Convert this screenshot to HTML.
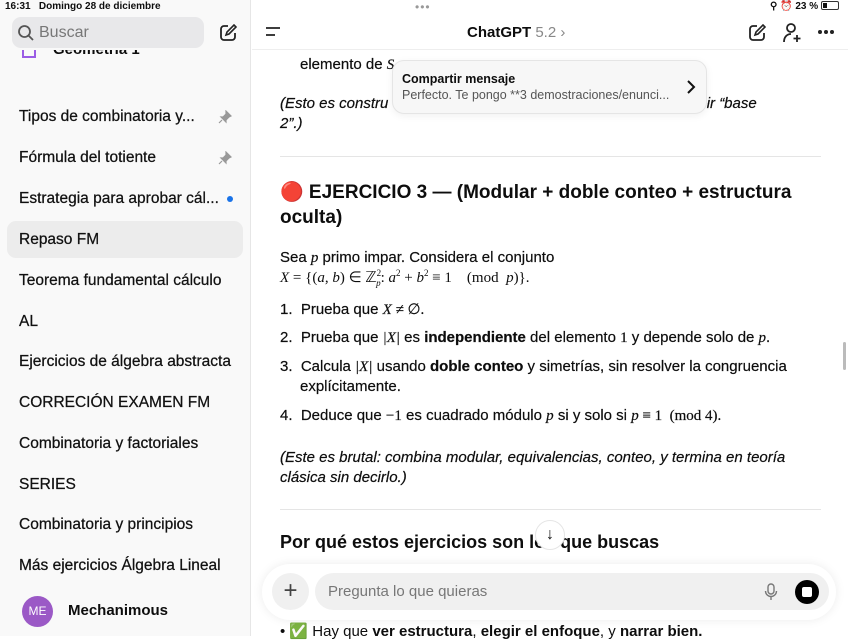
<!DOCTYPE html>
<html><head><meta charset="utf-8"><style>
*{margin:0;padding:0;box-sizing:border-box}
body{width:848px;height:636px;overflow:hidden;font-family:"Liberation Sans",sans-serif;color:#0d0d0d;background:#fff;position:relative}
.abs{position:absolute;white-space:nowrap}
#side{position:absolute;left:0;top:0;width:251px;height:636px;background:#f9f9f9;border-right:1px solid #e6e6e6}
.it{position:absolute;left:19px;font-size:15.5px;color:#111;-webkit-text-stroke:0.25px #111}
.m{font-family:"Liberation Serif",serif;font-style:italic}
.mr{font-family:"Liberation Serif",serif}
.t{font-size:15px;-webkit-text-stroke:0.2px #111}
</style></head><body>
<div id="side">
<div class="abs" style="left:0;top:50px;width:250px;height:16px;overflow:hidden">
<div class="abs" style="left:22px;top:-4px;width:14px;height:12px;border:2px solid #9b5de5;border-top:none"></div>
<div class="abs" style="left:53px;top:-9px;font-size:15px;font-weight:bold">Geometría 1</div></div>
<div class="abs" style="left:0;top:0;width:250px;height:50px;background:#f9f9f9"></div>
<div class="abs" style="left:5px;top:1px;font-size:10px;font-weight:bold">16:31&nbsp;&nbsp;&nbsp;Domingo 28 de diciembre</div>
<div class="abs" style="left:12px;top:17px;width:192px;height:31px;border-radius:9px;background:#e8e8ea"></div>
<svg class="abs" style="left:17px;top:24px" width="18" height="18" viewBox="0 0 18 18"><circle cx="7.5" cy="7.5" r="5.5" fill="none" stroke="#555" stroke-width="1.8"/><path d="M11.5 11.5L16 16" stroke="#555" stroke-width="1.8"/></svg>
<div class="abs" style="left:39px;top:24px;font-size:16px;color:#777">Buscar</div>
<svg class="abs" style="left:219px;top:24px" width="18" height="18" viewBox="0 0 18 18"><path d="M9 2H5a3 3 0 0 0-3 3v8a3 3 0 0 0 3 3h8a3 3 0 0 0 3-3V9" fill="none" stroke="#222" stroke-width="1.8"/><path d="M7 11l1-3 7-7 2 2-7 7z" fill="none" stroke="#222" stroke-width="1.6"/></svg>
<div class="abs" style="left:7px;top:221px;width:236px;height:37px;border-radius:9px;background:#ececec"></div>
<div class="it" style="top:108px">Tipos de combinatoria y...</div>
<div class="it" style="top:149px">Fórmula del totiente</div>
<div class="it" style="top:190px">Estrategia para aprobar cál...</div>
<div class="it" style="top:231px">Repaso FM</div>
<div class="it" style="top:272px">Teorema fundamental cálculo</div>
<div class="it" style="top:313px">AL</div>
<div class="it" style="top:353px">Ejercicios de álgebra abstracta</div>
<div class="it" style="top:394px">CORRECIÓN EXAMEN FM</div>
<div class="it" style="top:435px">Combinatoria y factoriales</div>
<div class="it" style="top:476px">SERIES</div>
<div class="it" style="top:516px">Combinatoria y principios</div>
<div class="it" style="top:557px">Más ejercicios Álgebra Lineal</div>
<svg class="abs" style="left:218px;top:110px" width="14" height="14" viewBox="0 0 14 14"><path d="M8 1l5 5-2 1-3 3 0 2-5-5 2 0 3-3z M4 10l-3 3" fill="#999" stroke="#999" stroke-width="1.2"/></svg>
<svg class="abs" style="left:218px;top:151px" width="14" height="14" viewBox="0 0 14 14"><path d="M8 1l5 5-2 1-3 3 0 2-5-5 2 0 3-3z M4 10l-3 3" fill="#999" stroke="#999" stroke-width="1.2"/></svg>
<div class="abs" style="left:227px;top:196px;width:6px;height:6px;border-radius:50%;background:#1a73e8"></div>
<div class="abs" style="left:22px;top:596px;width:31px;height:31px;border-radius:50%;background:#9b59c6;color:#fff;font-size:12px;text-align:center;line-height:31px">ME</div>
<div class="abs" style="left:68px;top:602px;font-size:15px;font-weight:bold">Mechanimous</div>
</div>

<div class="abs" style="left:415px;top:0;font-size:12px;color:#999;letter-spacing:1px">•••</div>
<div class="abs" style="left:770px;top:1px;font-size:10px;font-weight:bold">⚲ ⏰ 23 % <span style="display:inline-block;width:18px;height:9px;border:1px solid #333;border-radius:2px;vertical-align:-1px;position:relative"><span style="position:absolute;left:1px;top:1px;width:4px;height:5px;background:#111"></span></span></div>
<svg class="abs" style="left:265px;top:26px" width="16" height="12"><path d="M1 2h14M1 9h9" stroke="#222" stroke-width="1.8"/></svg>
<div class="abs" style="left:467px;top:24px;font-size:15px;font-weight:bold">ChatGPT <span style="font-weight:normal;color:#888">5.2 ›</span></div>
<svg class="abs" style="left:748px;top:24px" width="18" height="18" viewBox="0 0 18 18"><path d="M9 2H5a3 3 0 0 0-3 3v8a3 3 0 0 0 3 3h8a3 3 0 0 0 3-3V9" fill="none" stroke="#222" stroke-width="1.8"/><path d="M7 11l1-3 7-7 2 2-7 7z" fill="none" stroke="#222" stroke-width="1.6"/></svg>
<svg class="abs" style="left:782px;top:22px" width="20" height="22" viewBox="0 0 20 22"><circle cx="9" cy="6" r="4" fill="none" stroke="#222" stroke-width="1.8"/><path d="M2 20c0-5 3-8 7-8" fill="none" stroke="#222" stroke-width="1.8"/><path d="M15 13v7M11.5 16.5h7" stroke="#222" stroke-width="1.8"/></svg>
<div class="abs" style="left:818px;top:30px;width:4px;height:4px;border-radius:50%;background:#222;box-shadow:6px 0 #222,12px 0 #222"></div>
<div class="abs" style="left:252px;top:49px;width:596px;height:1px;background:#eee"></div>

<div class="abs t" style="left:300px;top:56px">elemento de <span class="m">S</span></div>
<div class="abs t" style="left:280px;top:95px;font-style:italic">(Esto es constru</div>
<div class="abs t" style="left:670px;top:95px;font-style:italic">n decir “base</div>
<div class="abs t" style="left:280px;top:115px;font-style:italic">2”.)</div>
<div class="abs" style="left:392px;top:60px;width:315px;height:54px;border-radius:12px;background:#f7f7f7;border:1px solid #e5e5e5;box-shadow:0 2px 8px rgba(0,0,0,.06)"></div>
<div class="abs" style="left:402px;top:72px;font-size:12.5px;font-weight:bold">Compartir mensaje</div>
<div class="abs" style="left:402px;top:88px;font-size:12.5px;color:#555">Perfecto. Te pongo **3 demostraciones/enunci...</div>
<svg class="abs" style="left:686px;top:80px" width="10" height="14"><path d="M2 1l6 6-6 6" fill="none" stroke="#111" stroke-width="2"/></svg>
<div class="abs" style="left:280px;top:156px;width:541px;height:1px;background:#e5e5e5"></div>
<div class="abs" style="left:280px;top:180px;font-size:19px;font-weight:bold;line-height:25px">🔴 EJERCICIO 3 — (Modular + doble conteo + estructura<br>oculta)</div>
<div class="abs t" style="left:280px;top:249px">Sea <span class="m">p</span> primo impar. Considera el conjunto</div>
<div class="abs mr" style="left:280px;top:268px;font-size:15px"><i>X</i> = {(<i>a</i>, <i>b</i>) ∈ ℤ<sup style="font-size:9px">2</sup><sub style="font-size:9px;margin-left:-5px"><i>p</i></sub>: <i>a</i><sup style="font-size:9px">2</sup> + <i>b</i><sup style="font-size:9px">2</sup> ≡ 1 &nbsp;&nbsp;&nbsp;(mod &nbsp;<i>p</i>)}.</div>
<div class="abs t" style="left:280px;top:300px">1.&nbsp; Prueba que <span class="m">X ≠ </span><span class="mr">∅.</span></div>
<div class="abs t" style="left:280px;top:329px">2.&nbsp; Prueba que <span class="m">|X|</span> es <b>independiente</b> del elemento <span class="mr">1</span> y depende solo de <span class="m">p</span>.</div>
<div class="abs t" style="left:280px;top:358px">3.&nbsp; Calcula <span class="m">|X|</span> usando <b>doble conteo</b> y simetrías, sin resolver la congruencia</div>
<div class="abs t" style="left:300px;top:378px">explícitamente.</div>
<div class="abs t" style="left:280px;top:407px">4.&nbsp; Deduce que <span class="mr">−1</span> es cuadrado módulo <span class="m">p</span> si y solo si <span class="m">p</span><span class="mr"> ≡ 1 &nbsp;(mod 4).</span></div>
<div class="abs t" style="left:280px;top:448px;font-style:italic;line-height:20px">(Este es brutal: combina modular, equivalencias, conteo, y termina en teoría<br>clásica sin decirlo.)</div>
<div class="abs" style="left:280px;top:509px;width:541px;height:1px;background:#e5e5e5"></div>
<div class="abs" style="left:280px;top:532px;font-size:18px;font-weight:bold">Por qué estos ejercicios son los que buscas</div>
<div class="abs" style="left:535px;top:520px;width:30px;height:30px;border-radius:50%;background:#fff;border:1px solid #e5e5e5;text-align:center;line-height:28px;font-size:16px">↓</div>
<div class="abs" style="left:280px;top:622px;font-size:15px">• ✅ Hay que <b>ver estructura</b>, <b>elegir el enfoque</b>, y <b>narrar bien.</b></div>
<div class="abs" style="left:262px;top:564px;width:574px;height:56px;border-radius:28px;background:#fff;box-shadow:0 0 10px rgba(0,0,0,.08)"></div>
<div class="abs" style="left:272px;top:573px;width:37px;height:37px;border-radius:50%;background:#f0f0f0;text-align:center;line-height:36px;font-size:24px;color:#444">+</div>
<div class="abs" style="left:315px;top:573px;width:514px;height:37px;border-radius:19px;background:#f0f0f0"></div>
<div class="abs" style="left:328px;top:583px;font-size:15px;color:#777">Pregunta lo que quieras</div>
<svg class="abs" style="left:764px;top:583px" width="14" height="18" viewBox="0 0 14 18"><rect x="4" y="1" width="6" height="10" rx="3" fill="none" stroke="#777" stroke-width="1.4"/><path d="M1.5 8a5.5 5.5 0 0 0 11 0M7 13.5V17" fill="none" stroke="#777" stroke-width="1.4"/></svg>
<div class="abs" style="left:795px;top:580px;width:24px;height:24px;border-radius:50%;background:#000"></div>
<div class="abs" style="left:802px;top:587px;width:10px;height:10px;border-radius:2px;background:#fff"></div>
<div class="abs" style="left:843px;top:342px;width:3px;height:28px;border-radius:2px;background:#bbb"></div>
</body></html>
